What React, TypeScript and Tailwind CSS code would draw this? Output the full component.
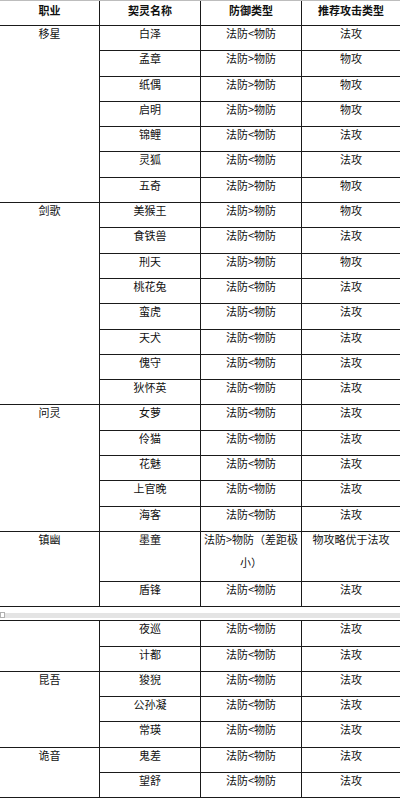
import React from 'react';

type Row = [string, string, string];

interface Group {
  name: string;
  rows: Row[];
}

const lt = '法防<物防';
const gt = '法防>物防';

const before: Group[] = [
  {
    name: '移星',
    rows: [
      ['白泽', lt, '法攻'],
      ['孟章', gt, '物攻'],
      ['纸偶', gt, '物攻'],
      ['启明', gt, '物攻'],
      ['锦鲤', lt, '法攻'],
      ['灵狐', lt, '法攻'],
      ['五奇', gt, '物攻'],
    ],
  },
  {
    name: '剑歌',
    rows: [
      ['美猴王', gt, '物攻'],
      ['食铁兽', lt, '法攻'],
      ['刑天', gt, '物攻'],
      ['桃花兔', lt, '法攻'],
      ['蛮虎', lt, '法攻'],
      ['天犬', lt, '法攻'],
      ['傀守', lt, '法攻'],
      ['狄怀英', lt, '法攻'],
    ],
  },
  {
    name: '问灵',
    rows: [
      ['女萝', lt, '法攻'],
      ['伶猫', lt, '法攻'],
      ['花魅', lt, '法攻'],
      ['上官晚', lt, '法攻'],
      ['海客', lt, '法攻'],
    ],
  },
];

const after: Group[] = [
  {
    name: '',
    rows: [
      ['夜巡', lt, '法攻'],
      ['计都', lt, '法攻'],
    ],
  },
  {
    name: '昆吾',
    rows: [
      ['狻猊', lt, '法攻'],
      ['公孙凝', lt, '法攻'],
      ['常瑛', lt, '法攻'],
    ],
  },
  {
    name: '诡音',
    rows: [
      ['鬼差', lt, '法攻'],
      ['望舒', lt, '法攻'],
    ],
  },
];

function DataRow({ row }: { row: Row }) {
  return (
    <div className="flex h-[25.3px] border-b border-[#1a1a1a]">
      <div className="w-[101px] shrink-0 border-r border-[#1a1a1a] text-center leading-[14px]">{row[0]}</div>
      <div className="w-[101px] shrink-0 border-r border-[#1a1a1a] text-center leading-[14px]">{row[1]}</div>
      <div className="flex-1 text-center leading-[14px]">{row[2]}</div>
    </div>
  );
}

function GroupBlock({ group }: { group: Group }) {
  return (
    <div className="flex">
      <div className="w-[100px] shrink-0 border-r border-b border-[#1a1a1a] text-center leading-[14px]">{group.name}</div>
      <div className="flex-1">
        {group.rows.map((r) => (
          <DataRow key={r[0]} row={r} />
        ))}
      </div>
    </div>
  );
}

export default function App() {
  return (
    <div
      className="w-[400px] h-[811px] overflow-hidden bg-white text-[11px] text-[#111]"
      style={{ fontFamily: '"Noto Sans CJK SC", "Noto Sans", sans-serif' }}
    >
      {/* header */}
      <div className="flex h-[26px] border-t border-b border-t-[#bdbdbd] border-b-[#1a1a1a] font-bold">
        <div className="w-[100px] shrink-0 border-r border-[#1a1a1a] pt-[2px] text-center leading-[14px]">职业</div>
        <div className="w-[101px] shrink-0 border-r border-[#1a1a1a] pt-[2px] text-center leading-[14px]">契灵名称</div>
        <div className="w-[101px] shrink-0 border-r border-[#1a1a1a] pt-[2px] text-center leading-[14px]">防御类型</div>
        <div className="flex-1 pt-[2px] text-center leading-[14px]">推荐攻击类型</div>
      </div>

      {before.map((g) => (
        <GroupBlock key={g.name} group={g} />
      ))}

      {/* 镇幽, first page part */}
      <div className="flex">
        <div className="w-[100px] shrink-0 border-r border-b border-[#1a1a1a] text-center leading-[14px]">镇幽</div>
        <div className="flex-1">
          <div className="flex h-[50px] border-b border-[#1a1a1a] leading-[23px]">
            <div className="w-[101px] shrink-0 border-r border-[#1a1a1a] text-center">
              <div className="-mt-[4px]">墨童</div>
            </div>
            <div className="w-[101px] shrink-0 border-r border-[#1a1a1a] text-center">
              <div className="-mt-[4px]">
                <div className="whitespace-nowrap">法防&gt;物防（差距极</div>
                <div>小）</div>
              </div>
            </div>
            <div className="flex-1 text-center">
              <div className="-mt-[4px]">物攻略优于法攻</div>
            </div>
          </div>
          <div className="flex h-[25.3px] border-b border-[#1a1a1a]">
            <div className="w-[101px] shrink-0 border-r border-[#1a1a1a] text-center leading-[14px]">盾锋</div>
            <div className="w-[101px] shrink-0 border-r border-[#1a1a1a] text-center leading-[14px]">{lt}</div>
            <div className="flex-1 text-center leading-[14px]">法攻</div>
          </div>
        </div>
      </div>

      {/* page break */}
      <div className="relative h-[13px] pt-[6px]">
        <div className="h-[5px] bg-[#e4e4e4]" />
        <div className="absolute left-0 top-[5px] h-[6px] w-[5px] border border-[#b0b0b0] bg-white" />
      </div>

      <div className="border-t border-[#1a1a1a]">
        {after.map((g) => (
          <GroupBlock key={g.rows[0][0]} group={g} />
        ))}
      </div>
    </div>
  );
}
